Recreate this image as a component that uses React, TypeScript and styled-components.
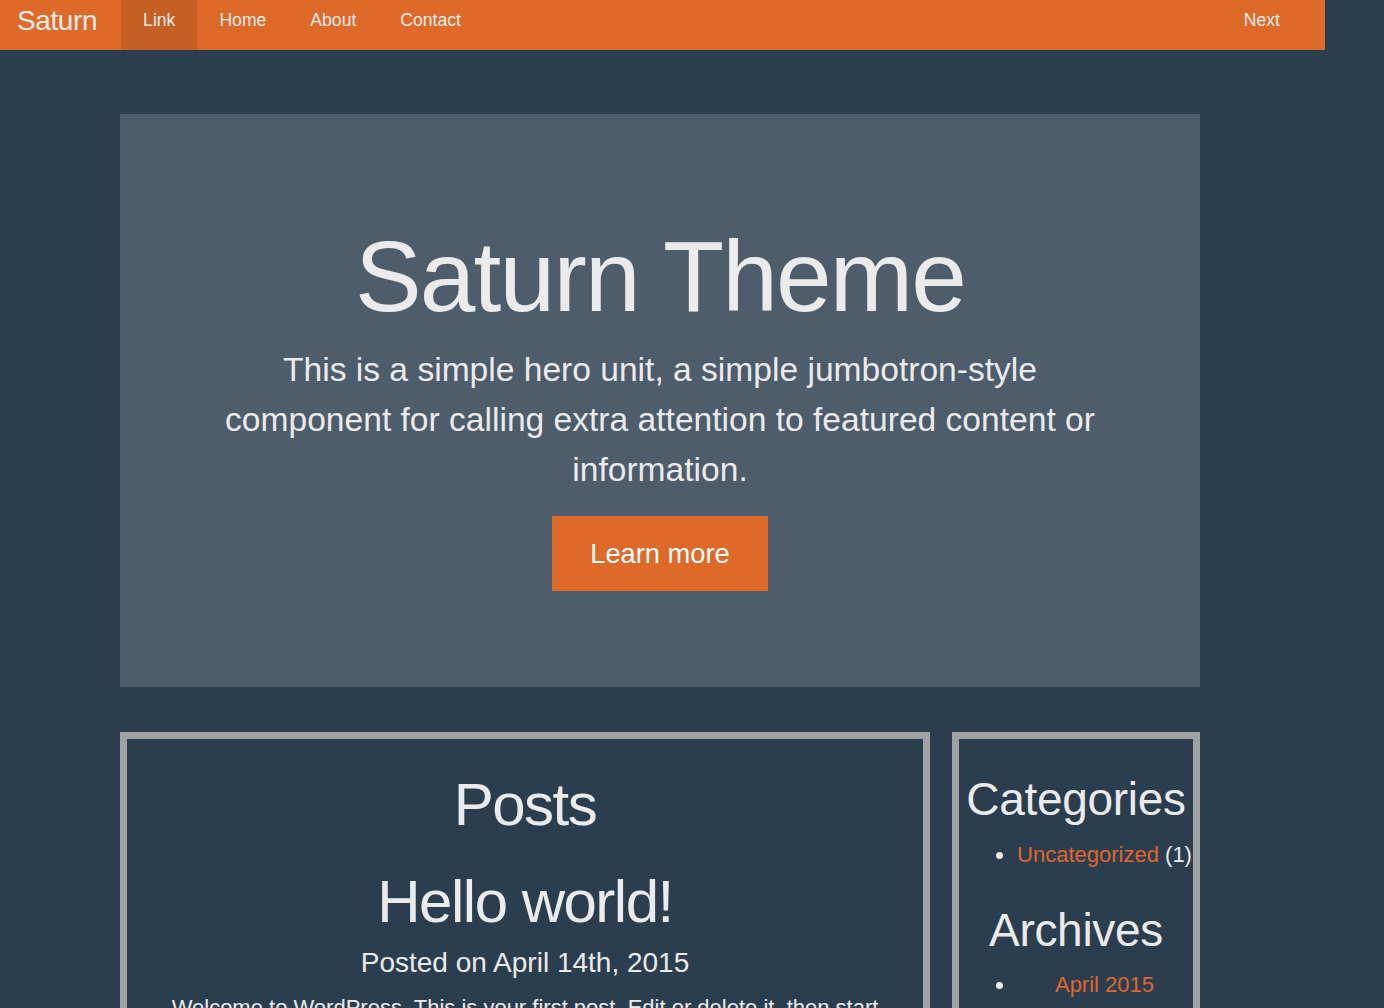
import React from "react";
import styled, { createGlobalStyle } from "styled-components";

const GlobalStyle = createGlobalStyle`
  html, body {
    margin: 0;
    padding: 0;
    background: #2b3e50;
  }
  body {
    font-family: "Liberation Sans", Arial, Helvetica, sans-serif;
    color: #ebebeb;
  }
  * { box-sizing: border-box; }
`;

const Page = styled.div`
  width: 1325px;
  min-height: 1008px;
`;

const Navbar = styled.nav`
  display: flex;
  align-items: flex-start;
  height: 50px;
  width: 1325px;
  background: #de6a29;
`;

const Brand = styled.a`
  display: block;
  height: 50px;
  padding: 7px 24px 0 17px;
  font-size: 28px;
  line-height: 28px;
  letter-spacing: -0.4px;
  color: #ebebeb;
  text-decoration: none;
`;

const NavList = styled.ul`
  display: flex;
  list-style: none;
  margin: 0;
  padding: 0;
`;

const NavItem = styled.li<{ $active?: boolean }>`
  height: 50px;
  background: ${(p) => (p.$active ? "#c65f24" : "transparent")};
`;

const NavLink = styled.a`
  display: block;
  height: 50px;
  padding: 10px 22px 0;
  font-size: 17.6px;
  line-height: 20px;
  color: #ebebeb;
  text-decoration: none;
`;

const Spacer = styled.div`
  flex: 1;
`;

const RightNav = styled(NavList)`
  margin-right: 23px;
`;

const Container = styled.main`
  width: 1080px;
  margin: 64px 0 0 120px;
`;

const Jumbotron = styled.section`
  background: #4e5d6c;
  padding: 107px 0 96px;
  text-align: center;
`;

const HeroTitle = styled.h1`
  margin: 0;
  font-size: 100px;
  line-height: 110px;
  font-weight: normal;
  letter-spacing: -1.8px;
  color: #ebebeb;
`;

const HeroText = styled.p`
  margin: 14px 0 0;
  font-size: 33.6px;
  line-height: 50px;
  color: #ebebeb;
`;

const Button = styled.a`
  display: inline-block;
  margin-top: 21px;
  height: 75px;
  padding: 0 38px;
  background: #de6a29;
  color: #ffffff;
  font-size: 27.3px;
  line-height: 75px;
  text-decoration: none;
`;

const Row = styled.div`
  display: flex;
  gap: 22px;
  margin-top: 45px;
  align-items: flex-start;
`;

const Box = styled.div<{ $width: number }>`
  width: ${(p) => p.$width}px;
  border: 7px solid #a1a1a1;
  text-align: center;
  min-height: 400px;
`;

const PostsBody = styled.div`
  padding: 0 30px 30px;
`;

const SectionTitle = styled.h2`
  margin: 33px 0 0;
  font-size: 60px;
  line-height: 66px;
  font-weight: normal;
  letter-spacing: -1.5px;
`;

const PostTitle = styled.h2`
  margin: 31px 0 0;
  font-size: 60px;
  line-height: 66px;
  font-weight: normal;
  letter-spacing: -1.5px;
`;

const PostMeta = styled.p`
  margin: 13px 0 0;
  font-size: 28px;
  line-height: 30.8px;
`;

const PostContent = styled.p`
  margin: 12px 0 0;
  font-size: 22px;
  line-height: 33px;
`;

const SideTitle = styled.h3<{ $first?: boolean }>`
  margin: ${(p) => (p.$first ? "35px" : "0")} 0 13px;
  font-size: 46px;
  line-height: 50.6px;
  font-weight: normal;
  letter-spacing: -0.3px;
  white-space: nowrap;
`;

const SideList = styled.ul`
  margin: 0 0 34px;
  padding: 0 0 0 57px;
  list-style: disc outside;
`;

const SideItem = styled.li`
  font-size: 22px;
  line-height: 33px;
  white-space: nowrap;
  text-align: center;
`;

const OrangeLink = styled.a`
  color: #e0672a;
  text-decoration: none;
`;

export default function App() {
  return (
    <Page>
      <GlobalStyle />
      <Navbar>
        <Brand href="#">Saturn</Brand>
        <NavList>
          <NavItem $active>
            <NavLink href="#">Link</NavLink>
          </NavItem>
          <NavItem>
            <NavLink href="#">Home</NavLink>
          </NavItem>
          <NavItem>
            <NavLink href="#">About</NavLink>
          </NavItem>
          <NavItem>
            <NavLink href="#">Contact</NavLink>
          </NavItem>
        </NavList>
        <Spacer />
        <RightNav>
          <NavItem>
            <NavLink href="#">Next</NavLink>
          </NavItem>
        </RightNav>
      </Navbar>
      <Container>
        <Jumbotron>
          <HeroTitle>Saturn Theme</HeroTitle>
          <HeroText>
            This is a simple hero unit, a simple jumbotron-style
            <br />
            component for calling extra attention to featured content or
            <br />
            information.
          </HeroText>
          <Button href="#">Learn more</Button>
        </Jumbotron>
        <Row>
          <Box $width={810}>
            <PostsBody>
              <SectionTitle>Posts</SectionTitle>
              <PostTitle>Hello world!</PostTitle>
              <PostMeta>Posted on April 14th, 2015</PostMeta>
              <PostContent>
                Welcome to WordPress. This is your first post. Edit or delete it, then start writing!
              </PostContent>
            </PostsBody>
          </Box>
          <Box $width={248}>
            <SideTitle $first>Categories</SideTitle>
            <SideList>
              <SideItem>
                <OrangeLink href="#">Uncategorized</OrangeLink> (1)
              </SideItem>
            </SideList>
            <SideTitle>Archives</SideTitle>
            <SideList>
              <SideItem>
                <OrangeLink href="#">April 2015</OrangeLink>
              </SideItem>
            </SideList>
          </Box>
        </Row>
      </Container>
    </Page>
  );
}
